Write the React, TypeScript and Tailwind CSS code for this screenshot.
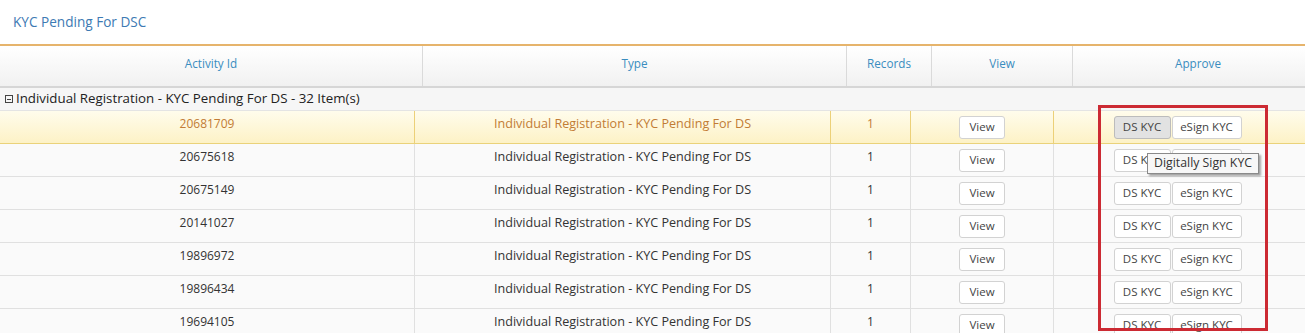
import React from "react";

const ids = ["20681709", "20675618", "20675149", "20141027", "19896972", "19896434", "19694105"];
const TYPE = "Individual Registration - KYC Pending For DS";

function Btn({ children, pressed, w }: { children: React.ReactNode; pressed?: boolean; w: string }) {
  return (
    <div
      className={`${w} h-[23px] flex items-center justify-center rounded-[3px] border text-[11.5px] text-[#444] ${
        pressed ? "bg-[#e2e2e2] border-[#bcbcbc]" : "bg-white border-[#d2d2d2]"
      }`}
    >
      {children}
    </div>
  );
}

export default function App() {
  return (
    <div
      className="relative w-[1305px] h-[333px] overflow-hidden bg-white text-[#333]"
      style={{ fontFamily: '"Open Sans", "Noto Sans", sans-serif' }}
    >
      <div className="h-[44px] flex items-center pl-[13px] text-[13.6px] text-[#3d7ab3]">KYC Pending For DSC</div>
      <div className="h-[2px] bg-[#e6b46c]" />
      {/* header */}
      <div className="flex h-[42px] bg-gradient-to-b from-white to-[#f1f1f1] border-b-2 border-[#d6d6d6] text-[11.7px] text-[#3a8dbf]">
        <div className="w-[423px] shrink-0 flex items-center justify-center pb-[4px] border-r border-[#dadada]">Activity Id</div>
        <div className="w-[424px] shrink-0 flex items-center justify-center pb-[4px] border-r border-[#dadada]">Type</div>
        <div className="w-[85px] shrink-0 flex items-center justify-center pb-[4px] border-r border-[#dadada]">Records</div>
        <div className="w-[141px] shrink-0 flex items-center justify-center pb-[4px] border-r border-[#dadada]">View</div>
        <div className="w-[250px] shrink-0 flex items-center justify-center pb-[4px]">Approve</div>
      </div>
      {/* group row */}
      <div className="h-[23px] flex items-center bg-[#f6f6f6] border-b border-[#e4e4e4] pl-[5px] text-[13.3px] text-[#222]">
        <div className="w-[8px] h-[8px] border border-[#444] flex items-center justify-center mr-[3px]">
          <div className="w-[4px] h-px bg-[#444]" />
        </div>
        Individual Registration - KYC Pending For DS - 32 Item(s)
      </div>
      {ids.map((id, i) => {
        const hl = i === 0;
        const bc = hl ? "border-[#ecd078]" : "border-[#e0e0e0]";
        return (
          <div
            key={id}
            className={`flex h-[33px] border-b text-[12px] ${
              hl ? "bg-gradient-to-b from-[#fffcec] to-[#fdf2c6] border-[#ead27a] text-[#c27c35]" : "bg-[#fafafa] border-[#e0e0e0]"
            }`}
          >
            <div className={`w-[415px] shrink-0 flex items-center justify-center pb-[6px] border-r ${bc}`}>{id}</div>
            <div className={`w-[416px] shrink-0 flex items-center justify-center pb-[6px] text-[12.6px] border-r ${bc}`}>{TYPE}</div>
            <div className={`w-[80px] shrink-0 flex items-center justify-center pb-[6px] border-r ${bc}`}>1</div>
            <div className={`w-[143px] shrink-0 flex items-center justify-center border-r ${bc}`}>
              <Btn w="w-[46px]">View</Btn>
            </div>
            <div className="w-[247px] shrink-0 flex items-center justify-center gap-[1px]">
              <Btn w="w-[57px]" pressed={hl}>DS KYC</Btn>
              <Btn w="w-[70px]">eSign KYC</Btn>
            </div>
          </div>
        );
      })}
      {/* tooltip */}
      <div className="absolute left-[1147px] top-[153px] h-[21px] px-[6px] flex items-center bg-[#f7f7f7] border border-[#8a8a8a] text-[12.3px] text-[#333] shadow-[2px_2px_2px_rgba(0,0,0,0.35)]">
        Digitally Sign KYC
      </div>
      {/* annotation box */}
      <div className="absolute left-[1098px] top-[105px] w-[170px] h-[226px] border-[3px] border-[#cc2a33]" />
    </div>
  );
}
